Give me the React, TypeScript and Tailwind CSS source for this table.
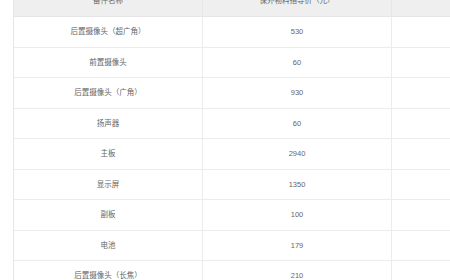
import React from "react";

const rows: [string, string][] = [
  ["后置摄像头（超广角）", "530"],
  ["前置摄像头", "60"],
  ["后置摄像头（广角）", "930"],
  ["扬声器", "60"],
  ["主板", "2940"],
  ["显示屏", "1350"],
  ["副板", "100"],
  ["电池", "179"],
  ["后置摄像头（长焦）", "210"],
];

export default function App() {
  return (
    <div
      className="w-[450px] h-[280px] overflow-hidden bg-white text-[7.5px] text-[#666]"
      style={{ fontFamily: '"Liberation Sans", "Noto Sans CJK SC", sans-serif' }}
    >
      <div className="ml-[13px] -mt-[14px] w-[500px] border-l border-[#e6e6e6]">
        <div className="grid grid-cols-[189px_189px_1fr] h-[31px] bg-[#efefef] border-b border-[#e6e6e6]">
          <div className="flex items-center justify-center border-r border-[#e6e6e6]">备件名称</div>
          <div className="flex items-center justify-center border-r border-[#e6e6e6]">保外物料指导价（元）</div>
          <div />
        </div>
        {rows.map(([name, price]) => (
          <div
            key={name}
            className="grid grid-cols-[189px_189px_1fr] h-[30.5px] border-b border-[#ececec]"
          >
            <div className="flex items-center justify-center border-r border-[#ececec]">{name}</div>
            <div className="flex items-center justify-center border-r border-[#ececec]">{price}</div>
            <div />
          </div>
        ))}
      </div>
    </div>
  );
}
